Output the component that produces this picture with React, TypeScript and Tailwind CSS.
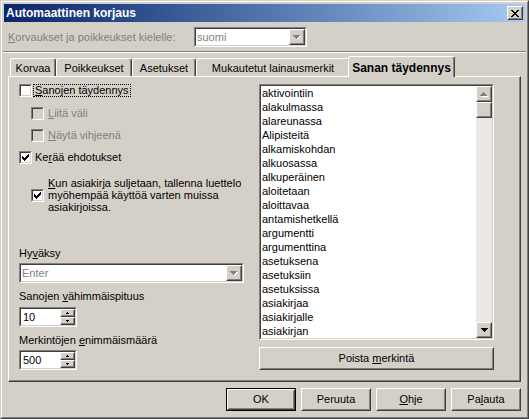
import React from "react";

const RO = "border border-t-white border-l-white border-r-[#404040] border-b-[#404040]";
const RI = "border border-t-[#D4D0C8] border-l-[#D4D0C8] border-r-[#808080] border-b-[#808080]";
const SO = "border border-t-[#808080] border-l-[#808080] border-r-white border-b-white";
const SI = "border border-t-[#404040] border-l-[#404040] border-r-[#D4D0C8] border-b-[#D4D0C8]";

const X_GLYPH = ["XX....XX", ".XX..XX.", "..XXXX..", "...XX...", "..XXXX..", ".XX..XX.", "XX....XX"];
const CHECK = ["......X", ".....XX", "X...XXX", "XX.XXX.", "XXXXX..", ".XXX...", "..X...."];
const DOWN = ["XXXXXXX", ".XXXXX.", "..XXX..", "...X..."];
const UP = ["...X...", "..XXX..", ".XXXXX.", "XXXXXXX"];
const SUP = [".X.", "XXX"];
const SDOWN = ["XXX", ".X."];

function Pix({ rows, color, shadow }: { rows: string[]; color: string; shadow?: string }) {
  const extra = shadow ? 1 : 0;
  const w = rows[0].length + extra;
  const h = rows.length + extra;
  const rects: React.ReactElement[] = [];
  if (shadow) {
    rows.forEach((r, y) =>
      r.split("").forEach((c, x) => {
        if (c === "X") rects.push(<rect key={`s${x}-${y}`} x={x + 1} y={y + 1} width={1} height={1} fill={shadow} />);
      })
    );
  }
  rows.forEach((r, y) =>
    r.split("").forEach((c, x) => {
      if (c === "X") rects.push(<rect key={`m${x}-${y}`} x={x} y={y} width={1} height={1} fill={color} />);
    })
  );
  return (
    <svg width={w} height={h} viewBox={`0 0 ${w} ${h}`} shapeRendering="crispEdges" className="block">
      {rects}
    </svg>
  );
}

function Raised({ className = "", innerClassName = "", children }: { className?: string; innerClassName?: string; children?: React.ReactNode }) {
  return (
    <div className={`${RO} bg-[#D4D0C8] ${className}`}>
      <div className={`${RI} w-full h-full ${innerClassName}`}>{children}</div>
    </div>
  );
}

function Sunken({ className = "", innerClassName = "", children }: { className?: string; innerClassName?: string; children?: React.ReactNode }) {
  return (
    <div className={`${SO} ${className}`}>
      <div className={`${SI} w-full h-full ${innerClassName}`}>{children}</div>
    </div>
  );
}

function Combo({ className, text }: { className: string; text: string }) {
  return (
    <Sunken className={`shrink-0 ${className}`} innerClassName="bg-white flex">
      <div className="flex-1 pl-[1px] leading-[16px] text-[#808080]">{text}</div>
      <Raised className="w-[16px] h-[16px]" innerClassName="flex items-center justify-center">
        <Pix rows={DOWN} color="#808080" shadow="#ffffff" />
      </Raised>
    </Sunken>
  );
}

function Spin({ value }: { value: string }) {
  return (
    <Sunken className="w-[58px] h-[20px]" innerClassName="bg-white flex">
      <div className="flex-1 pl-[2px] leading-[16px]">{value}</div>
      <div className="w-[15px] flex flex-col">
        <Raised className="h-[8px] w-full" innerClassName="flex items-center justify-center">
          <Pix rows={SUP} color="#000" />
        </Raised>
        <Raised className="h-[8px] w-full" innerClassName="flex items-center justify-center">
          <Pix rows={SDOWN} color="#000" />
        </Raised>
      </div>
    </Sunken>
  );
}

function CheckBox({ checked = false, disabled = false }: { checked?: boolean; disabled?: boolean }) {
  return (
    <Sunken
      className="w-[13px] h-[13px] shrink-0"
      innerClassName={`${disabled ? "bg-[#D4D0C8]" : "bg-white"} flex items-center justify-center`}
    >
      {checked && <Pix rows={CHECK} color="#000" />}
    </Sunken>
  );
}

const ITEMS = [
  "aktivointiin",
  "alakulmassa",
  "alareunassa",
  "Alipisteitä",
  "alkamiskohdan",
  "alkuosassa",
  "alkuperäinen",
  "aloitetaan",
  "aloittavaa",
  "antamishetkellä",
  "argumentti",
  "argumenttina",
  "asetuksena",
  "asetuksiin",
  "asetuksissa",
  "asiakirjaa",
  "asiakirjalle",
  "asiakirjan",
];

const TAB = "h-[18px] shrink-0 border-t border-l border-r border-t-white border-l-white border-r-[#404040] shadow-[inset_-1px_0_0_#808080] rounded-t-[3px] text-center pt-[3px] leading-[13px] whitespace-nowrap";

function Btn({ children, isDefault = false }: { children: React.ReactNode; isDefault?: boolean }) {
  const inner = (
    <Raised className="w-full h-full" innerClassName="flex items-center justify-center leading-[13px]">
      {children}
    </Raised>
  );
  return isDefault ? (
    <div className="w-[70px] h-[23px] border border-black">{inner}</div>
  ) : (
    <div className="w-[70px] h-[23px]">{inner}</div>
  );
}

export default function App() {
  return (
    <div className="w-[529px] h-[419px] border border-t-[#D4D0C8] border-l-[#D4D0C8] border-r-[#404040] border-b-[#404040] font-['Liberation_Sans',Arial,sans-serif] text-[11px] text-black">
      <div className="w-full h-full border border-t-white border-l-white border-r-[#808080] border-b-[#808080] bg-[#D4D0C8] p-[2px] flex flex-col">
        {/* Title bar */}
        <div className="h-[18px] shrink-0 flex items-start bg-linear-to-r from-[#0A246A] to-[#A6CAF0] pl-[2px] pr-[2px]">
          <div className="flex-1 text-white font-bold text-[12px] leading-[18px] whitespace-nowrap">Automaattinen korjaus</div>
          <Raised className="w-[16px] h-[14px] mt-[2px]" innerClassName="flex items-center justify-center">
            <Pix rows={X_GLYPH} color="#000" />
          </Raised>
        </div>

        {/* Language row */}
        <div className="mt-[5px] h-[20px] shrink-0 flex items-center pl-[4px]">
          <div className="w-[186px] shrink-0 text-[#808080] leading-[13px] whitespace-nowrap">
            <span className="underline">K</span>orvaukset ja poikkeukset kielelle:
          </div>
          <Combo className="w-[113px] h-[20px]" text="suomi" />
        </div>

        {/* Separator */}
        <div className="mt-[4px] -mx-[1px] h-[2px] shrink-0 border-t border-t-[#808080] border-b border-b-white" />

        {/* Tabs */}
        <div className="mt-[3px] h-[20px] shrink-0 flex items-end pl-[6px]">
          <div className={`${TAB} w-[46px]`}>Korvaa</div>
          <div className={`${TAB} w-[76px]`}>Poikkeukset</div>
          <div className={`${TAB} w-[64px]`}>Asetukset</div>
          <div className={`${TAB} w-[154px]`}>Mukautetut lainausmerkit</div>
          <div className="h-[21px] w-[107px] -ml-[2px] -mb-[1px] relative z-10 bg-[#D4D0C8] shrink-0 border-t border-l border-r border-t-white border-l-white border-r-[#404040] shadow-[inset_-1px_0_0_#808080] rounded-t-[3px] text-center pt-[4px] leading-[14px] font-bold text-[12px] whitespace-nowrap">
            Sanan täydennys
          </div>
        </div>

        {/* Panel */}
        <div className="mx-[4px] h-[306px] shrink-0 border border-t-white border-l-white border-r-[#404040] border-b-[#404040] shadow-[inset_-1px_-1px_0_#808080] pl-[10px] pt-[7px] flex">
          {/* Left column */}
          <div className="w-[225px] shrink-0 flex flex-col">
            <div className="h-[13px] flex items-center">
              <CheckBox />
              <span className="ml-[1px] border border-dotted border-black leading-[11px] px-[1px] whitespace-nowrap">
                <span className="underline">S</span>anojen täydennys
              </span>
            </div>
            <div className="mt-[10px] h-[13px] flex items-center pl-[12px] text-[#808080]">
              <CheckBox disabled />
              <span className="ml-[4px] leading-[13px] whitespace-nowrap">
                <span className="underline">L</span>iitä väli
              </span>
            </div>
            <div className="mt-[9px] h-[13px] flex items-center pl-[12px] text-[#808080]">
              <CheckBox disabled />
              <span className="ml-[4px] leading-[13px] whitespace-nowrap">
                <span className="underline">N</span>äytä vihjeenä
              </span>
            </div>
            <div className="mt-[9px] h-[13px] flex items-center">
              <CheckBox checked />
              <span className="ml-[3px] leading-[13px] whitespace-nowrap">
                Ke<span className="underline">r</span>ää ehdotukset
              </span>
            </div>
            <div className="mt-[13px] flex items-center pl-[12px]">
              <CheckBox checked />
              <div className="ml-[4px] leading-[12px] whitespace-nowrap">
                <span className="underline">K</span>un asiakirja suljetaan, tallenna luettelo
                <br />
                myöhempää käyttöä varten muissa
                <br />
                asiakirjoissa.
              </div>
            </div>

            <div className="mt-[34px] leading-[13px] whitespace-nowrap">
              Hy<span className="underline">v</span>äksy
            </div>
            <div className="mt-[3px]">
              <Combo className="w-[225px] h-[20px]" text="Enter" />
            </div>

            <div className="mt-[7px] leading-[13px] whitespace-nowrap">
              Sanojen <span className="underline">v</span>ähimmäispituus
            </div>
            <div className="mt-[4px]">
              <Spin value="10" />
            </div>

            <div className="mt-[7px] leading-[13px] whitespace-nowrap">
              Merkintöjen <span className="underline">e</span>nimmäismäärä
            </div>
            <div className="mt-[3px]">
              <Spin value="500" />
            </div>
          </div>

          {/* Right column */}
          <div className="ml-[15px] w-[235px] shrink-0 flex flex-col">
            <Sunken className="w-[235px] h-[256px]" innerClassName="bg-white flex">
              <div className="flex-1 flex flex-col overflow-hidden">
                {ITEMS.map((it) => (
                  <div key={it} className="h-[14px] shrink-0 leading-[14px] pl-[1px] whitespace-nowrap">
                    {it}
                  </div>
                ))}
              </div>
              <div className="w-[16px] flex flex-col bg-[#EBE9E5]">
                <Raised className="w-[16px] h-[16px] shrink-0" innerClassName="flex items-center justify-center">
                  <Pix rows={UP} color="#808080" shadow="#ffffff" />
                </Raised>
                <Raised className="w-[16px] h-[16px] shrink-0" />
                <div className="flex-1" />
                <Raised className="w-[16px] h-[16px] shrink-0" innerClassName="flex items-center justify-center">
                  <Pix rows={DOWN} color="#000" />
                </Raised>
              </div>
            </Sunken>
            <div className="mt-[7px]">
              <Raised className="w-[235px] h-[23px]" innerClassName="flex items-center justify-center leading-[13px]">
                <span>
                  Poista <span className="underline">m</span>erkintä
                </span>
              </Raised>
            </div>
          </div>
        </div>

        {/* Buttons */}
        <div className="mt-[6px] shrink-0 flex justify-end gap-[5px] pr-[4px]">
          <Btn isDefault>OK</Btn>
          <Btn>Peruuta</Btn>
          <Btn>
            <span>
              <span className="underline">O</span>hje
            </span>
          </Btn>
          <Btn>
            <span>
              Pa<span className="underline">l</span>auta
            </span>
          </Btn>
        </div>
      </div>
    </div>
  );
}
